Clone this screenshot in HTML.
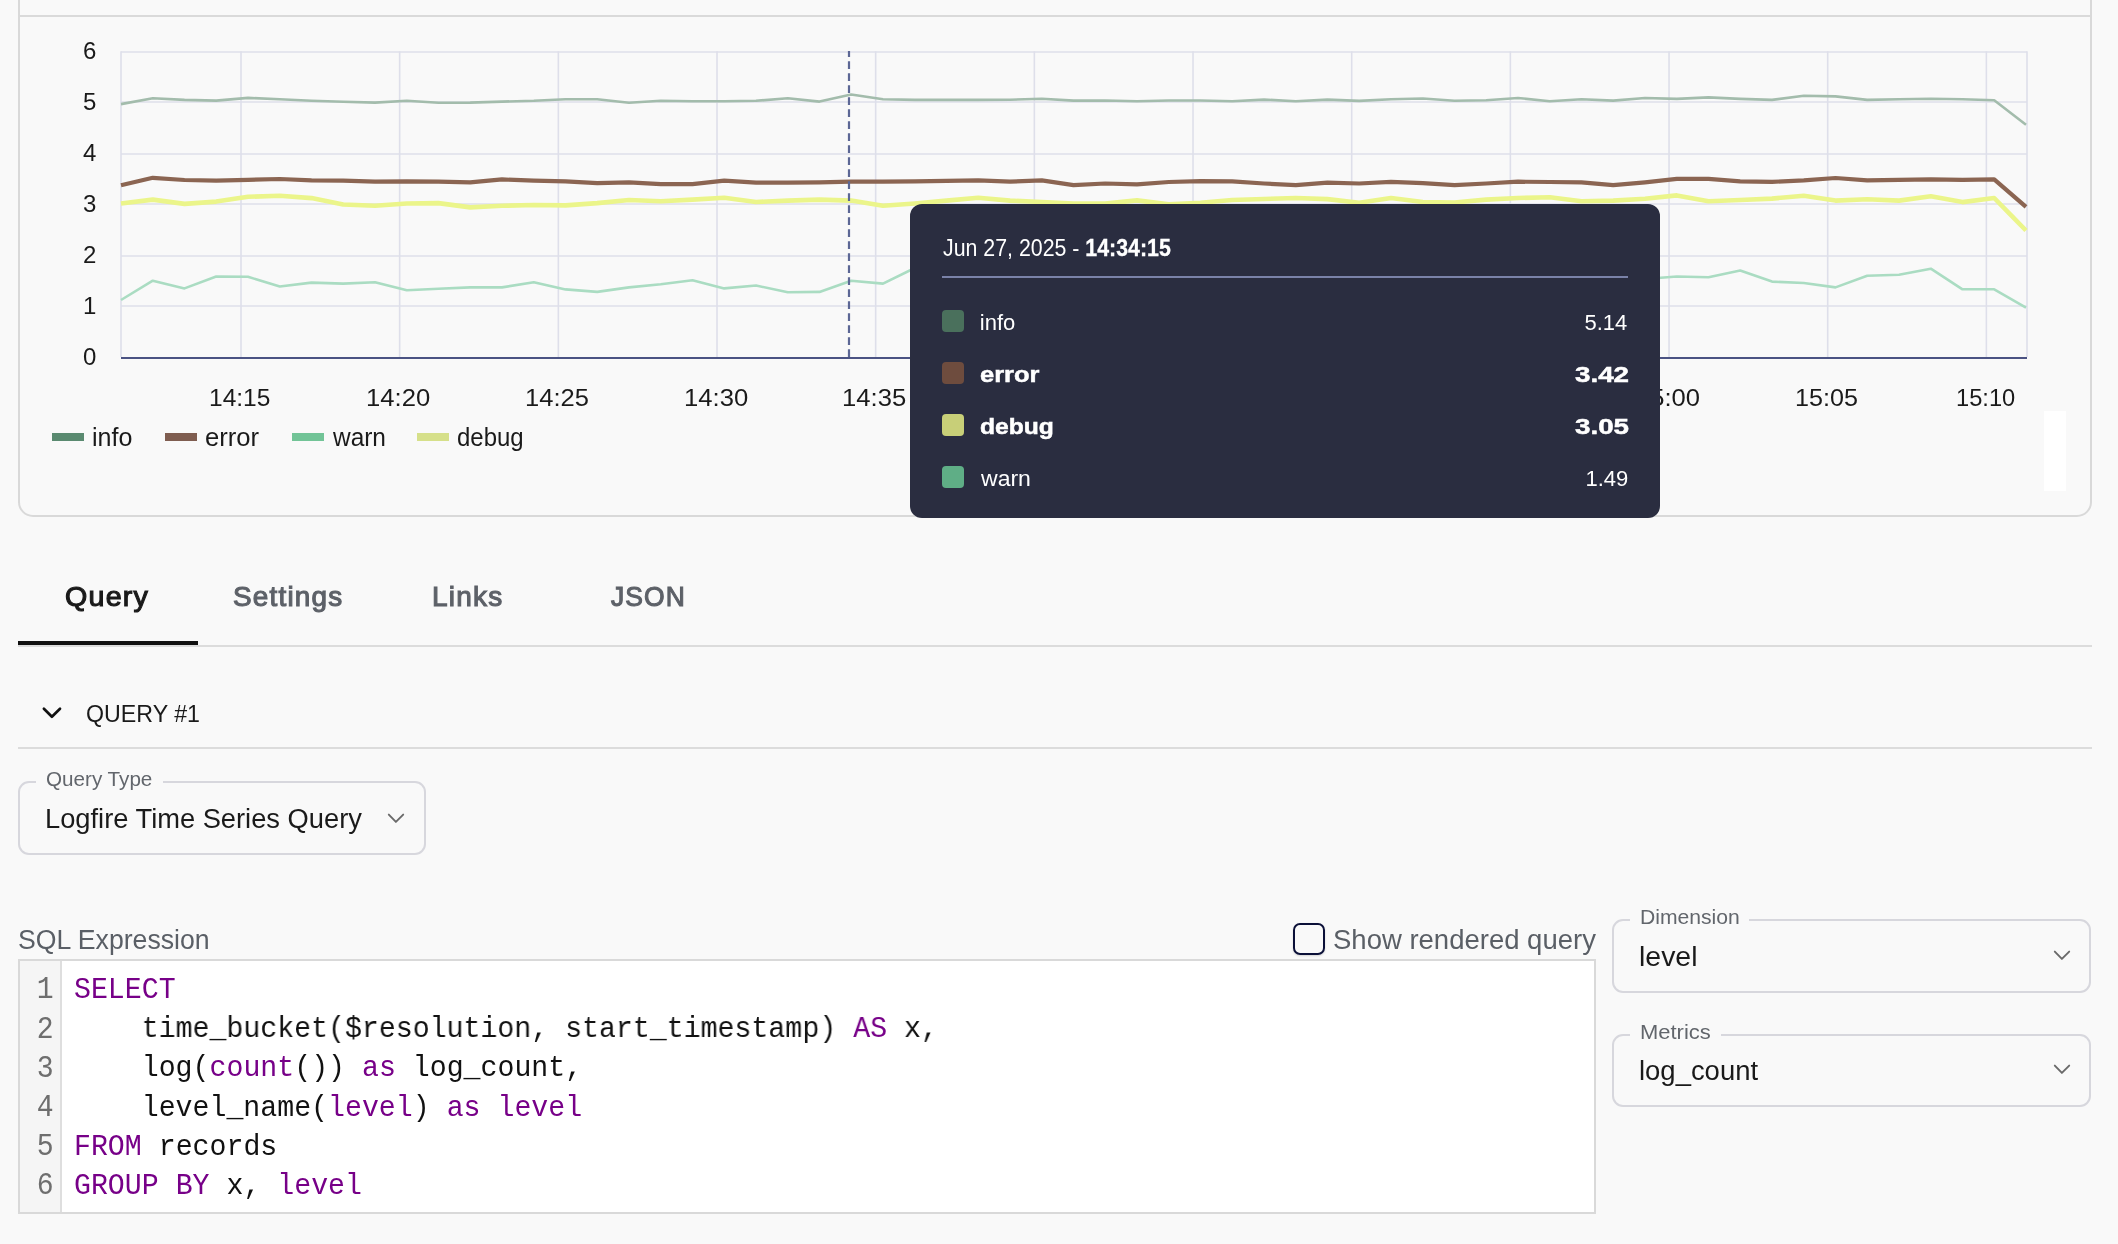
<!DOCTYPE html>
<html><head><meta charset="utf-8"><style>
html,body{margin:0;padding:0;width:2118px;height:1244px;overflow:hidden;background:#f9f9f9;}
#root{position:absolute;left:0;top:0;width:2118px;height:1244px;will-change:transform;}
</style></head><body><div id="root">
<div style="position:absolute;left:18px;top:-40px;width:2074px;height:557px;box-sizing:border-box;border:2px solid #d9d9d9;border-radius:15px;background:#f9f9f9;"></div><div style="position:absolute;left:20px;top:15px;width:2070px;height:2px;background:#dadada;"></div><svg style="position:absolute;left:0;top:0" width="2118" height="520"><line x1="121" y1="52.00" x2="2027" y2="52.00" stroke="#dedfea" stroke-width="1.6"/><line x1="121" y1="102.00" x2="2027" y2="102.00" stroke="#dedfea" stroke-width="1.6"/><line x1="121" y1="154.00" x2="2027" y2="154.00" stroke="#dedfea" stroke-width="1.6"/><line x1="121" y1="204.00" x2="2027" y2="204.00" stroke="#dedfea" stroke-width="1.6"/><line x1="121" y1="256.00" x2="2027" y2="256.00" stroke="#dedfea" stroke-width="1.6"/><line x1="121" y1="306.00" x2="2027" y2="306.00" stroke="#dedfea" stroke-width="1.6"/><line x1="121.00" y1="51.2" x2="121.00" y2="357" stroke="#dedfea" stroke-width="1.6"/><line x1="241.00" y1="51.2" x2="241.00" y2="357" stroke="#dedfea" stroke-width="1.6"/><line x1="399.67" y1="51.2" x2="399.67" y2="357" stroke="#dedfea" stroke-width="1.6"/><line x1="558.34" y1="51.2" x2="558.34" y2="357" stroke="#dedfea" stroke-width="1.6"/><line x1="717.01" y1="51.2" x2="717.01" y2="357" stroke="#dedfea" stroke-width="1.6"/><line x1="875.68" y1="51.2" x2="875.68" y2="357" stroke="#dedfea" stroke-width="1.6"/><line x1="1034.35" y1="51.2" x2="1034.35" y2="357" stroke="#dedfea" stroke-width="1.6"/><line x1="1193.02" y1="51.2" x2="1193.02" y2="357" stroke="#dedfea" stroke-width="1.6"/><line x1="1351.69" y1="51.2" x2="1351.69" y2="357" stroke="#dedfea" stroke-width="1.6"/><line x1="1510.36" y1="51.2" x2="1510.36" y2="357" stroke="#dedfea" stroke-width="1.6"/><line x1="1669.03" y1="51.2" x2="1669.03" y2="357" stroke="#dedfea" stroke-width="1.6"/><line x1="1827.70" y1="51.2" x2="1827.70" y2="357" stroke="#dedfea" stroke-width="1.6"/><line x1="1986.37" y1="51.2" x2="1986.37" y2="357" stroke="#dedfea" stroke-width="1.6"/><line x1="2027.00" y1="51.2" x2="2027.00" y2="357" stroke="#dedfea" stroke-width="1.6"/><defs><clipPath id="pc"><rect x="121" y="51" width="1906" height="306"/></clipPath></defs><g fill="none" stroke-linejoin="round"><polyline points="121.0,104.1 152.8,98.3 184.5,99.9 216.2,100.6 248.0,97.9 279.8,99.3 311.5,100.8 343.2,101.8 375.0,102.6 406.8,100.8 438.5,102.8 470.2,102.6 502.0,101.6 533.8,100.8 565.5,99.3 597.2,99.3 629.0,102.8 660.8,100.8 692.5,101.2 724.2,101.2 756.0,100.8 787.8,98.3 819.5,101.6 851.2,94.5 883.0,99.3 914.8,99.9 946.5,99.9 978.2,99.9 1010.0,99.7 1041.8,98.7 1073.5,100.6 1105.2,100.5 1137.0,101.2 1168.8,100.5 1200.5,100.5 1232.2,101.2 1264.0,99.6 1295.8,101.2 1327.5,99.6 1359.2,100.9 1391.0,99.3 1422.8,98.5 1454.5,100.8 1486.2,100.3 1518.0,98.0 1549.8,101.2 1581.5,99.3 1613.2,100.6 1645.0,98.0 1676.8,98.9 1708.5,97.4 1740.2,98.9 1772.0,99.9 1803.8,95.8 1835.5,96.4 1867.2,99.9 1899.0,99.3 1930.8,98.7 1962.5,99.3 1994.2,100.3 2026.0,124.8" stroke="#a3bcac" stroke-width="2.6"/><polyline points="121.0,300.0 152.8,280.7 184.5,288.4 216.2,276.5 248.0,276.8 279.8,286.5 311.5,282.6 343.2,283.6 375.0,282.2 406.8,290.3 438.5,288.8 470.2,287.4 502.0,287.4 533.8,282.2 565.5,289.4 597.2,291.9 629.0,287.4 660.8,284.2 692.5,280.3 724.2,288.4 756.0,285.5 787.8,292.3 819.5,291.9 851.2,280.7 883.0,283.6 914.8,268.0 946.5,262.0 978.2,270.0 1010.0,275.0 1041.8,280.0 1073.5,278.0 1105.2,282.0 1137.0,276.0 1168.8,279.0 1200.5,284.0 1232.2,280.0 1264.0,277.0 1295.8,281.0 1327.5,283.0 1359.2,279.0 1391.0,276.0 1422.8,280.0 1454.5,282.0 1486.2,278.0 1518.0,281.0 1549.8,279.0 1581.5,283.0 1613.2,280.0 1645.0,279.0 1676.8,276.5 1708.5,277.2 1740.2,270.6 1772.0,281.6 1803.8,283.0 1835.5,287.4 1867.2,275.8 1899.0,274.8 1930.8,268.7 1962.5,289.3 1994.2,289.3 2026.0,307.6" stroke="#aadcc2" stroke-width="2.6"/><polyline points="121.0,185.2 152.8,177.8 184.5,180.0 216.2,180.7 248.0,179.8 279.8,179.0 311.5,180.3 343.2,180.7 375.0,181.7 406.8,181.3 438.5,181.7 470.2,182.3 502.0,179.4 533.8,180.7 565.5,181.3 597.2,183.2 629.0,182.3 660.8,184.2 692.5,184.2 724.2,180.7 756.0,182.7 787.8,182.7 819.5,182.3 851.2,181.7 883.0,181.7 914.8,181.3 946.5,180.9 978.2,180.3 1010.0,181.7 1041.8,180.3 1073.5,185.2 1105.2,183.5 1137.0,184.3 1168.8,182.0 1200.5,181.1 1232.2,181.4 1264.0,183.5 1295.8,185.2 1327.5,182.7 1359.2,183.5 1391.0,181.9 1422.8,183.2 1454.5,185.2 1486.2,183.5 1518.0,181.7 1549.8,182.0 1581.5,182.3 1613.2,185.2 1645.0,182.3 1676.8,178.8 1708.5,178.8 1740.2,181.3 1772.0,181.9 1803.8,180.3 1835.5,178.0 1867.2,180.3 1899.0,179.9 1930.8,179.3 1962.5,179.9 1994.2,179.3 2026.0,206.9" stroke="#8b6552" stroke-width="4.2"/><polyline points="121.0,203.5 152.8,199.6 184.5,203.9 216.2,201.6 248.0,196.8 279.8,195.8 311.5,198.1 343.2,204.5 375.0,205.8 406.8,203.5 438.5,203.1 470.2,207.4 502.0,205.8 533.8,205.0 565.5,205.4 597.2,203.1 629.0,200.0 660.8,201.2 692.5,199.6 724.2,197.7 756.0,202.0 787.8,200.6 819.5,199.6 851.2,200.6 883.0,205.8 914.8,203.5 946.5,200.6 978.2,197.7 1010.0,200.6 1041.8,202.0 1073.5,203.5 1105.2,203.6 1137.0,200.4 1168.8,204.4 1200.5,202.8 1232.2,200.0 1264.0,199.0 1295.8,198.0 1327.5,199.1 1359.2,202.8 1391.0,198.0 1422.8,202.0 1454.5,202.5 1486.2,199.6 1518.0,198.0 1549.8,197.3 1581.5,201.2 1613.2,200.6 1645.0,198.7 1676.8,195.4 1708.5,201.2 1740.2,200.0 1772.0,198.6 1803.8,195.7 1835.5,200.6 1867.2,199.2 1899.0,200.6 1930.8,196.3 1962.5,202.1 1994.2,198.0 2026.0,230.5" stroke="#ebf58a" stroke-width="4.6"/></g><line x1="121" y1="358" x2="2027" y2="358" stroke="#4b5383" stroke-width="2"/><line x1="849" y1="49.2" x2="849" y2="357" stroke="#5c6795" stroke-width="2.2" stroke-dasharray="7.7,4.3" clip-path="url(#pc)"/></svg><div style="position:absolute;left:83.00px;top:344.68px;font-family:'Liberation Sans', sans-serif;font-size:24px;line-height:24px;font-weight:normal;letter-spacing:0px;white-space:pre;color:#1a1a1a;">0</div><div style="position:absolute;left:83.00px;top:293.73px;font-family:'Liberation Sans', sans-serif;font-size:24px;line-height:24px;font-weight:normal;letter-spacing:0px;white-space:pre;color:#1a1a1a;">1</div><div style="position:absolute;left:83.00px;top:242.78px;font-family:'Liberation Sans', sans-serif;font-size:24px;line-height:24px;font-weight:normal;letter-spacing:0px;white-space:pre;color:#1a1a1a;">2</div><div style="position:absolute;left:83.00px;top:191.83px;font-family:'Liberation Sans', sans-serif;font-size:24px;line-height:24px;font-weight:normal;letter-spacing:0px;white-space:pre;color:#1a1a1a;">3</div><div style="position:absolute;left:83.00px;top:140.88px;font-family:'Liberation Sans', sans-serif;font-size:24px;line-height:24px;font-weight:normal;letter-spacing:0px;white-space:pre;color:#1a1a1a;">4</div><div style="position:absolute;left:83.00px;top:89.93px;font-family:'Liberation Sans', sans-serif;font-size:24px;line-height:24px;font-weight:normal;letter-spacing:0px;white-space:pre;color:#1a1a1a;">5</div><div style="position:absolute;left:83.00px;top:38.98px;font-family:'Liberation Sans', sans-serif;font-size:24px;line-height:24px;font-weight:normal;letter-spacing:0px;white-space:pre;color:#1a1a1a;">6</div><div style="position:absolute;left:209.21px;top:386.60px;font-family:'Liberation Sans', sans-serif;font-size:23.5px;line-height:23.5px;font-weight:normal;letter-spacing:0px;white-space:pre;color:#1a1a1a;transform:scaleX(1.0439);transform-origin:0 0;">14:15</div><div style="position:absolute;left:366.48px;top:386.60px;font-family:'Liberation Sans', sans-serif;font-size:23.5px;line-height:23.5px;font-weight:normal;letter-spacing:0px;white-space:pre;color:#1a1a1a;transform:scaleX(1.0912);transform-origin:0 0;">14:20</div><div style="position:absolute;left:525.30px;top:386.60px;font-family:'Liberation Sans', sans-serif;font-size:23.5px;line-height:23.5px;font-weight:normal;letter-spacing:0px;white-space:pre;color:#1a1a1a;transform:scaleX(1.0860);transform-origin:0 0;">14:25</div><div style="position:absolute;left:683.82px;top:386.60px;font-family:'Liberation Sans', sans-serif;font-size:23.5px;line-height:23.5px;font-weight:normal;letter-spacing:0px;white-space:pre;color:#1a1a1a;transform:scaleX(1.0912);transform-origin:0 0;">14:30</div><div style="position:absolute;left:842.49px;top:386.60px;font-family:'Liberation Sans', sans-serif;font-size:23.5px;line-height:23.5px;font-weight:normal;letter-spacing:0px;white-space:pre;color:#1a1a1a;transform:scaleX(1.0912);transform-origin:0 0;">14:35</div><div style="position:absolute;left:1001.26px;top:386.60px;font-family:'Liberation Sans', sans-serif;font-size:23.5px;line-height:23.5px;font-weight:normal;letter-spacing:0px;white-space:pre;color:#1a1a1a;transform:scaleX(1.0877);transform-origin:0 0;">14:40</div><div style="position:absolute;left:1159.93px;top:386.60px;font-family:'Liberation Sans', sans-serif;font-size:23.5px;line-height:23.5px;font-weight:normal;letter-spacing:0px;white-space:pre;color:#1a1a1a;transform:scaleX(1.0877);transform-origin:0 0;">14:45</div><div style="position:absolute;left:1318.60px;top:386.60px;font-family:'Liberation Sans', sans-serif;font-size:23.5px;line-height:23.5px;font-weight:normal;letter-spacing:0px;white-space:pre;color:#1a1a1a;transform:scaleX(1.0877);transform-origin:0 0;">14:50</div><div style="position:absolute;left:1477.27px;top:386.60px;font-family:'Liberation Sans', sans-serif;font-size:23.5px;line-height:23.5px;font-weight:normal;letter-spacing:0px;white-space:pre;color:#1a1a1a;transform:scaleX(1.0877);transform-origin:0 0;">14:55</div><div style="position:absolute;left:1635.94px;top:386.60px;font-family:'Liberation Sans', sans-serif;font-size:23.5px;line-height:23.5px;font-weight:normal;letter-spacing:0px;white-space:pre;color:#1a1a1a;transform:scaleX(1.0877);transform-origin:0 0;">15:00</div><div style="position:absolute;left:1795.13px;top:386.60px;font-family:'Liberation Sans', sans-serif;font-size:23.5px;line-height:23.5px;font-weight:normal;letter-spacing:0px;white-space:pre;color:#1a1a1a;transform:scaleX(1.0702);transform-origin:0 0;">15:05</div><div style="position:absolute;left:1955.66px;top:386.60px;font-family:'Liberation Sans', sans-serif;font-size:23.5px;line-height:23.5px;font-weight:normal;letter-spacing:0px;white-space:pre;color:#1a1a1a;transform:scaleX(1.0070);transform-origin:0 0;">15:10</div><div style="position:absolute;left:52px;top:433px;width:32px;height:8px;background:#5a8a70;"></div><div style="position:absolute;left:91.90px;top:424.63px;font-family:'Liberation Sans', sans-serif;font-size:25px;line-height:25px;font-weight:normal;letter-spacing:0px;white-space:pre;color:#1a1a1a;transform:scaleX(1.0026);transform-origin:0 0;">info</div><div style="position:absolute;left:165px;top:433px;width:32px;height:8px;background:#7f5d50;"></div><div style="position:absolute;left:204.57px;top:424.63px;font-family:'Liberation Sans', sans-serif;font-size:25px;line-height:25px;font-weight:normal;letter-spacing:0px;white-space:pre;color:#1a1a1a;transform:scaleX(1.0250);transform-origin:0 0;">error</div><div style="position:absolute;left:292px;top:433px;width:32px;height:8px;background:#72c497;"></div><div style="position:absolute;left:332.60px;top:424.63px;font-family:'Liberation Sans', sans-serif;font-size:25px;line-height:25px;font-weight:normal;letter-spacing:0px;white-space:pre;color:#1a1a1a;transform:scaleX(0.9774);transform-origin:0 0;">warn</div><div style="position:absolute;left:417px;top:433px;width:32px;height:8px;background:#d6e08a;"></div><div style="position:absolute;left:456.84px;top:424.63px;font-family:'Liberation Sans', sans-serif;font-size:25px;line-height:25px;font-weight:normal;letter-spacing:0px;white-space:pre;color:#1a1a1a;transform:scaleX(0.9582);transform-origin:0 0;">debug</div><div style="position:absolute;left:2044px;top:411px;width:22px;height:80px;background:#fff;"></div><div style="position:absolute;left:910px;top:204px;width:750px;height:314px;background:#2a2d40;border-radius:12px;"></div><div style="position:absolute;left:942.50px;top:236.73px;font-family:'Liberation Sans', sans-serif;font-size:23px;line-height:23px;font-weight:normal;letter-spacing:0px;white-space:pre;color:#ffffff;transform:scaleX(0.9278);transform-origin:0 0;">Jun 27, 2025 - <b style="-webkit-text-stroke:0.3px #fff">14:34:15</b></div><div style="position:absolute;left:942px;top:276px;width:686px;height:2px;background:#7a82a8;"></div><div style="position:absolute;left:942px;top:310px;width:22px;height:22px;background:#4a705c;border-radius:4px;"></div><div style="position:absolute;left:979.80px;top:311.67px;font-family:'Liberation Sans', sans-serif;font-size:22px;line-height:22px;font-weight:normal;letter-spacing:0px;white-space:pre;color:#ffffff;">info</div><div style="position:absolute;left:1584.50px;top:311.67px;font-family:'Liberation Sans', sans-serif;font-size:22px;line-height:22px;font-weight:normal;letter-spacing:0px;white-space:pre;color:#ffffff;">5.14</div><div style="position:absolute;left:942px;top:362px;width:22px;height:22px;background:#6e4c3e;border-radius:4px;"></div><div style="position:absolute;left:979.64px;top:363.67px;font-family:'Liberation Sans', sans-serif;font-size:22px;line-height:22px;font-weight:bold;letter-spacing:0px;white-space:pre;color:#ffffff;-webkit-text-stroke:0.5px #fff;transform:scaleX(1.1580);transform-origin:0 0;">error</div><div style="position:absolute;left:1574.54px;top:363.67px;font-family:'Liberation Sans', sans-serif;font-size:22px;line-height:22px;font-weight:bold;letter-spacing:0px;white-space:pre;color:#ffffff;-webkit-text-stroke:0.5px #fff;transform:scaleX(1.2610);transform-origin:0 0;">3.42</div><div style="position:absolute;left:942px;top:414px;width:22px;height:22px;background:#c8cf78;border-radius:4px;"></div><div style="position:absolute;left:979.68px;top:415.67px;font-family:'Liberation Sans', sans-serif;font-size:22px;line-height:22px;font-weight:bold;letter-spacing:0px;white-space:pre;color:#ffffff;-webkit-text-stroke:0.5px #fff;transform:scaleX(1.1187);transform-origin:0 0;">debug</div><div style="position:absolute;left:1574.54px;top:415.67px;font-family:'Liberation Sans', sans-serif;font-size:22px;line-height:22px;font-weight:bold;letter-spacing:0px;white-space:pre;color:#ffffff;-webkit-text-stroke:0.5px #fff;transform:scaleX(1.2610);transform-origin:0 0;">3.05</div><div style="position:absolute;left:942px;top:466px;width:22px;height:22px;background:#5fae86;border-radius:4px;"></div><div style="position:absolute;left:980.80px;top:467.67px;font-family:'Liberation Sans', sans-serif;font-size:22px;line-height:22px;font-weight:normal;letter-spacing:0px;white-space:pre;color:#ffffff;transform:scaleX(1.0468);transform-origin:0 0;">warn</div><div style="position:absolute;left:1585.50px;top:467.67px;font-family:'Liberation Sans', sans-serif;font-size:22px;line-height:22px;font-weight:normal;letter-spacing:0px;white-space:pre;color:#ffffff;">1.49</div><div style="position:absolute;left:65.28px;top:582.99px;font-family:'Liberation Sans', sans-serif;font-size:28px;line-height:28px;font-weight:normal;letter-spacing:1.2px;white-space:pre;color:#1a1a1a;-webkit-text-stroke:1.1px #1a1a1a;transform:scaleX(1.0235);transform-origin:0 0;">Query</div><div style="position:absolute;left:232.70px;top:582.99px;font-family:'Liberation Sans', sans-serif;font-size:28px;line-height:28px;font-weight:normal;letter-spacing:1.2px;white-space:pre;color:#5d6168;-webkit-text-stroke:1.1px #5d6168;transform:scaleX(0.9963);transform-origin:0 0;">Settings</div><div style="position:absolute;left:432.00px;top:582.99px;font-family:'Liberation Sans', sans-serif;font-size:28px;line-height:28px;font-weight:normal;letter-spacing:1.2px;white-space:pre;color:#5d6168;-webkit-text-stroke:1.1px #5d6168;">Links</div><div style="position:absolute;left:610.80px;top:582.99px;font-family:'Liberation Sans', sans-serif;font-size:28px;line-height:28px;font-weight:normal;letter-spacing:1.2px;white-space:pre;color:#5d6168;-webkit-text-stroke:1.1px #5d6168;transform:scaleX(0.9442);transform-origin:0 0;">JSON</div><div style="position:absolute;left:18px;top:645px;width:2074px;height:2px;background:#dcdcdc;"></div><div style="position:absolute;left:18px;top:641px;width:180px;height:4px;background:#111;"></div><svg style="position:absolute;left:40px;top:703px" width="26" height="20"><polyline points="3.9,5.8 11.9,13.7 20,5.8" fill="none" stroke="#111" stroke-width="2.7" stroke-linecap="round" stroke-linejoin="round"/></svg><div style="position:absolute;left:85.73px;top:701.58px;font-family:'Liberation Sans', sans-serif;font-size:24px;line-height:24px;font-weight:normal;letter-spacing:0px;white-space:pre;color:#1a1a1a;transform:scaleX(0.9672);transform-origin:0 0;">QUERY #1</div><div style="position:absolute;left:18px;top:747px;width:2074px;height:2px;background:#dcdcdc;"></div><div style="position:absolute;left:18.3px;top:781.2px;width:407.5px;height:74.29999999999995px;box-sizing:border-box;border:2px solid #d7d7dd;border-radius:11px;"></div><div style="position:absolute;left:36px;top:779.2px;width:127px;height:6px;background:#f9f9f9;"></div><div style="position:absolute;left:46.07px;top:769.07px;font-family:'Liberation Sans', sans-serif;font-size:20px;line-height:20px;font-weight:normal;letter-spacing:0px;white-space:pre;color:#62666c;transform:scaleX(1.0324);transform-origin:0 0;">Query Type</div><div style="position:absolute;left:45.48px;top:805.64px;font-family:'Liberation Sans', sans-serif;font-size:27px;line-height:27px;font-weight:normal;letter-spacing:0px;white-space:pre;color:#1a1a1a;transform:scaleX(1.0103);transform-origin:0 0;">Logfire Time Series Query</div><svg style="position:absolute;left:386px;top:811.6px" width="24" height="16"><polyline points="2.8,2.6 9.9,9.9 17.2,2.6" fill="none" stroke="#6a6a6a" stroke-width="1.9" stroke-linecap="round" stroke-linejoin="round"/></svg><div style="position:absolute;left:17.91px;top:927.04px;font-family:'Liberation Sans', sans-serif;font-size:27px;line-height:27px;font-weight:normal;letter-spacing:0px;white-space:pre;color:#5a5f66;transform:scaleX(0.9875);transform-origin:0 0;">SQL Expression</div><div style="position:absolute;left:1293px;top:923px;width:32px;height:32px;box-sizing:border-box;border:2.5px solid #0b1038;border-radius:7px;box-shadow:0 1px 2px rgba(0,0,0,0.15);"></div><div style="position:absolute;left:1332.78px;top:926.94px;font-family:'Liberation Sans', sans-serif;font-size:27px;line-height:27px;font-weight:normal;letter-spacing:0px;white-space:pre;color:#5a5f66;transform:scaleX(1.0183);transform-origin:0 0;">Show rendered query</div><div style="position:absolute;left:18px;top:959px;width:1578px;height:255px;box-sizing:border-box;border:2px solid #d9d9d9;background:#fff;"></div><div style="position:absolute;left:20px;top:961px;width:40px;height:251px;background:#f5f5f5;border-right:2px solid #dedede;"></div><div style="position:absolute;right:2064.90px;top:974.45px;font-family:'Liberation Mono', monospace;font-size:31px;line-height:31px;font-weight:normal;letter-spacing:0px;white-space:pre;color:#6e6e6e;transform:scaleX(0.906);transform-origin:right top;">1</div><div style="position:absolute;right:2064.90px;top:1013.55px;font-family:'Liberation Mono', monospace;font-size:31px;line-height:31px;font-weight:normal;letter-spacing:0px;white-space:pre;color:#6e6e6e;transform:scaleX(0.906);transform-origin:right top;">2</div><div style="position:absolute;right:2064.90px;top:1052.65px;font-family:'Liberation Mono', monospace;font-size:31px;line-height:31px;font-weight:normal;letter-spacing:0px;white-space:pre;color:#6e6e6e;transform:scaleX(0.906);transform-origin:right top;">3</div><div style="position:absolute;right:2064.90px;top:1091.75px;font-family:'Liberation Mono', monospace;font-size:31px;line-height:31px;font-weight:normal;letter-spacing:0px;white-space:pre;color:#6e6e6e;transform:scaleX(0.906);transform-origin:right top;">4</div><div style="position:absolute;right:2064.90px;top:1130.85px;font-family:'Liberation Mono', monospace;font-size:31px;line-height:31px;font-weight:normal;letter-spacing:0px;white-space:pre;color:#6e6e6e;transform:scaleX(0.906);transform-origin:right top;">5</div><div style="position:absolute;right:2064.90px;top:1169.95px;font-family:'Liberation Mono', monospace;font-size:31px;line-height:31px;font-weight:normal;letter-spacing:0px;white-space:pre;color:#6e6e6e;transform:scaleX(0.906);transform-origin:right top;">6</div><div style="position:absolute;left:1612px;top:919.3px;width:479px;height:73.90000000000009px;box-sizing:border-box;border:2px solid #d7d7dd;border-radius:11px;"></div><div style="position:absolute;left:1629.8px;top:917.3px;width:119.20000000000005px;height:6px;background:#f9f9f9;"></div><div style="position:absolute;left:1639.74px;top:907.27px;font-family:'Liberation Sans', sans-serif;font-size:20px;line-height:20px;font-weight:normal;letter-spacing:0px;white-space:pre;color:#62666c;transform:scaleX(1.0565);transform-origin:0 0;">Dimension</div><div style="position:absolute;left:1639.09px;top:944.14px;font-family:'Liberation Sans', sans-serif;font-size:27px;line-height:27px;font-weight:normal;letter-spacing:0px;white-space:pre;color:#1a1a1a;transform:scaleX(1.0538);transform-origin:0 0;">level</div><svg style="position:absolute;left:2051.7px;top:949px" width="24" height="16"><polyline points="2.8,2.6 9.9,9.9 17.2,2.6" fill="none" stroke="#6a6a6a" stroke-width="1.9" stroke-linecap="round" stroke-linejoin="round"/></svg><div style="position:absolute;left:1612px;top:1033.8px;width:479px;height:73.60000000000014px;box-sizing:border-box;border:2px solid #d7d7dd;border-radius:11px;"></div><div style="position:absolute;left:1629.8px;top:1031.8px;width:91.20000000000005px;height:6px;background:#f9f9f9;"></div><div style="position:absolute;left:1639.70px;top:1021.77px;font-family:'Liberation Sans', sans-serif;font-size:20px;line-height:20px;font-weight:normal;letter-spacing:0px;white-space:pre;color:#62666c;transform:scaleX(1.0984);transform-origin:0 0;">Metrics</div><div style="position:absolute;left:1639.17px;top:1057.94px;font-family:'Liberation Sans', sans-serif;font-size:27px;line-height:27px;font-weight:normal;letter-spacing:0px;white-space:pre;color:#1a1a1a;transform:scaleX(1.0165);transform-origin:0 0;">log_count</div><svg style="position:absolute;left:2051.7px;top:1063.3px" width="24" height="16"><polyline points="2.8,2.6 9.9,9.9 17.2,2.6" fill="none" stroke="#6a6a6a" stroke-width="1.9" stroke-linecap="round" stroke-linejoin="round"/></svg>
<div style="position:absolute;left:73.5px;top:975.22px;font-family:'Liberation Mono', monospace;font-size:30px;line-height:30px;color:#111;white-space:pre;transform:scaleX(0.9408);transform-origin:left top;"><span style="color:#770088">SELECT</span></div><div style="position:absolute;left:73.5px;top:1014.32px;font-family:'Liberation Mono', monospace;font-size:30px;line-height:30px;color:#111;white-space:pre;transform:scaleX(0.9408);transform-origin:left top;">    time_bucket($resolution, start_timestamp) <span style="color:#770088">AS</span> x,</div><div style="position:absolute;left:73.5px;top:1053.42px;font-family:'Liberation Mono', monospace;font-size:30px;line-height:30px;color:#111;white-space:pre;transform:scaleX(0.9408);transform-origin:left top;">    log(<span style="color:#770088">count</span>()) <span style="color:#770088">as</span> log_count,</div><div style="position:absolute;left:73.5px;top:1092.52px;font-family:'Liberation Mono', monospace;font-size:30px;line-height:30px;color:#111;white-space:pre;transform:scaleX(0.9408);transform-origin:left top;">    level_name(<span style="color:#770088">level</span>) <span style="color:#770088">as</span> <span style="color:#770088">level</span></div><div style="position:absolute;left:73.5px;top:1131.62px;font-family:'Liberation Mono', monospace;font-size:30px;line-height:30px;color:#111;white-space:pre;transform:scaleX(0.9408);transform-origin:left top;"><span style="color:#770088">FROM</span> records</div><div style="position:absolute;left:73.5px;top:1170.72px;font-family:'Liberation Mono', monospace;font-size:30px;line-height:30px;color:#111;white-space:pre;transform:scaleX(0.9408);transform-origin:left top;"><span style="color:#770088">GROUP</span> <span style="color:#770088">BY</span> x, <span style="color:#770088">level</span></div>
</div></body></html>
